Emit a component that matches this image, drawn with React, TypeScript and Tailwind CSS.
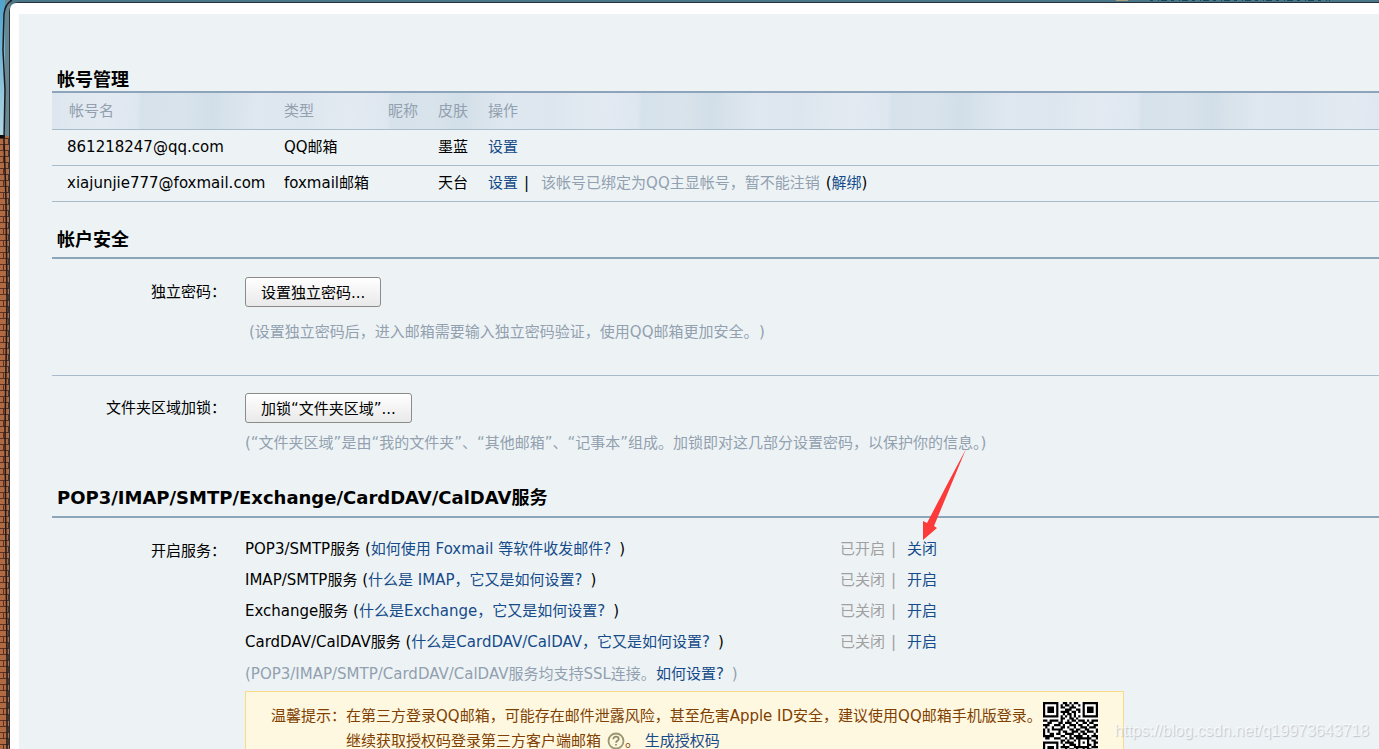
import type { ReactNode } from 'react';

type Account = {
    name: string;
    type: string;
    skin: string;
    bound?: boolean;
};

type Service = {
    name: string;
    help: string;
    enabled: boolean;
};

const accounts: Account[] = [
    { name: '861218247@qq.com', type: 'QQ邮箱', skin: '墨蓝' },
    { name: 'xiajunjie777@foxmail.com', type: 'foxmail邮箱', skin: '天台', bound: true },
];

const services: Service[] = [
    { name: 'POP3/SMTP服务', help: '如何使用 Foxmail 等软件收发邮件?', enabled: true },
    { name: 'IMAP/SMTP服务', help: '什么是 IMAP，它又是如何设置?', enabled: false },
    { name: 'Exchange服务', help: '什么是Exchange，它又是如何设置?', enabled: false },
    { name: 'CardDAV/CalDAV服务', help: '什么是CardDAV/CalDAV，它又是如何设置?', enabled: false },
];

const qrRows = [
    '1111111001101011001111111',
    '1000001010110100101000001',
    '1011101011001110001011101',
    '1011101000111001101011101',
    '1011101011110110101011101',
    '1000001001011010001000001',
    '1111111010101010101111111',
    '0000000011001101000000000',
    '1101111010010110111010111',
    '0011000110111001001101100',
    '1110011101001110110010011',
    '0100100011010010011101110',
    '1010111110001101100110001',
    '1010000101100111011011101',
    '1001101100111100101100010',
    '1111100011001011110010111',
    '0110011100101101111111001',
    '0000000011010010100010110',
    '1111111010111100101010011',
    '1000001001001110100011010',
    '1011101011110011111110111',
    '1011101000101101001011000',
    '1011101010011110110101101',
    '1000001011001001101100110',
    '1111111001110110011011001',
];

function Backdrop() {
    return (
        <svg aria-hidden="true" className="absolute inset-0 h-full w-full">
            <defs>
                <linearGradient id="sky" x1="0" y1="0" x2="0" y2="1">
                    <stop offset="0" stopColor="#4fa3cc" />
                    <stop offset="1" stopColor="#b4d6e3" />
                </linearGradient>
                <pattern id="bricks" width="10" height="12" patternUnits="userSpaceOnUse">
                    <rect width="10" height="12" fill="#b16a42" />
                    <path d="M0 .5H10M0 6.5H10M3.5 0V6M8.5 6V12" stroke="#5a3020" />
                </pattern>
            </defs>
            <rect width="100%" height="100%" fill="#4b7688" />
            <rect width="5" height="136" fill="url(#sky)" />
            <rect x="5" width="5" height="136" fill="#6b8792" />
            <rect y="136" width="10" height="100%" fill="url(#bricks)" />
            <rect y="135" width="5" height="3" fill="#0c0a0a" />
            <path
                d="M7 800V660L6 560L5 430L7 300L6 200L4 140L5 90L3 50L4 14Q5 4 12 0"
                fill="none"
                stroke="#171c20"
                strokeWidth="1.5"
            />
            <path d="M9.500 800V12Q10 3 18 2.500H3000" fill="none" stroke="#25313a" />
            <path d="M1116 .5h12" stroke="#a5a079" />
            <path d="M1150 .5h180" stroke="#1d4657" strokeDasharray="3 5 1 2 6 4" />
        </svg>
    );
}

function Heading({ className, children }: { className: string; children: ReactNode }) {
    return (
        <h2 className={`border-b-2 border-[#8ca5bb] pl-[5px] text-[18px] leading-[22px] font-bold ${className}`}>
            {children}
        </h2>
    );
}

function TextLink({ children }: { children: ReactNode }) {
    return (
        <a href="#" className="text-[#164b8a] hover:underline">
            {children}
        </a>
    );
}

function ActionButton({ id, children }: { id: string; children: ReactNode }) {
    return (
        <button
            id={id}
            type="button"
            className="h-[30px] rounded-[3px] border border-[#8b8b8b] bg-linear-to-b from-white to-[#e9e9e9] px-[15px] pt-0.5 leading-6"
        >
            {children}
        </button>
    );
}

function Arrow() {
    return (
        <svg
            aria-hidden="true"
            viewBox="0 0 44 91"
            className="pointer-events-none absolute bottom-[25px] left-4 h-[91px] w-11"
        >
            <path d="M43 0L27 30L4 74L0 72V91L14 79L11 77Z" fill="#fd3a3a" />
        </svg>
    );
}

function HelpIcon() {
    return (
        <svg aria-hidden="true" viewBox="0 0 18 18" className="ml-1.5 inline-block h-[18px] w-[18px] align-[-4px]">
            <circle cx="9" cy="9" r="7.500" fill="#fbf6dc" stroke="#9a9672" strokeWidth="1.800" />
            <path
                d="M6.300 7.200C6.300 5.600 7.500 4.700 9 4.700S11.700 5.600 11.700 7C11.700 8.700 9 8.800 9 10.800M9 12V13.600"
                fill="none"
                stroke="#8d8966"
                strokeWidth="1.700"
            />
        </svg>
    );
}

function QrCode() {
    return (
        <svg role="img" aria-label="QQ邮箱手机版" viewBox="0 0 25 25" className="h-[55px] w-[55px] shrink-0 bg-white">
            <path
                d={qrRows
                    .flatMap((row, y) => [...row].map((cell, x) => (cell === '1' ? `M${x} ${y}h1v1h-1z` : '')))
                    .join('')}
                fill="#000"
            />
        </svg>
    );
}

function Accounts() {
    return (
        <table className="w-full table-fixed text-left leading-5">
            <colgroup>
                <col className="w-[217px]" />
                <col className="w-[104px]" />
                <col className="w-[50px]" />
                <col className="w-[50px]" />
                <col />
            </colgroup>
            <thead>
                <tr className="h-9 border-b border-[#a9bccb] bg-[repeating-linear-gradient(92deg,#dde6ee_0px,#e3eaf2_50px,#dee6ef_86px,#d6e2eb_90px,#d9e3ec_130px,#d2dfe8_160px,#d9e3ec_180px,#dfe7f0_205px,#dde6ee_250px)] text-[#92a0af]">
                    <th className="pl-[17px] font-normal">帐号名</th>
                    <th className="pl-[15px] font-normal">类型</th>
                    <th className="pl-[15px] font-normal">昵称</th>
                    <th className="pl-[15px] font-normal">皮肤</th>
                    <th className="pl-[15px] font-normal">操作</th>
                </tr>
            </thead>
            <tbody>
                {accounts.map(account => (
                    <tr key={account.name} className="h-9 border-b border-[#a9bccb] whitespace-nowrap">
                        <td className="pl-[15px]">{account.name}</td>
                        <td className="pl-[15px]">{account.type}</td>
                        <td />
                        <td className="pl-[15px]">{account.skin}</td>
                        <td className="pl-[15px]">
                            <TextLink>设置</TextLink>
                            {account.bound && (
                                <>
                                    <span className="mx-1.5">|</span>
                                    <span className="mx-1.5 text-[#92a0af]">
                                        该帐号已绑定为QQ主显帐号，暂不能注销
                                    </span>
                                    (<TextLink>解绑</TextLink>)
                                </>
                            )}
                        </td>
                    </tr>
                ))}
            </tbody>
        </table>
    );
}

export default function App() {
    return (
        <div className="relative h-screen overflow-hidden font-['DejaVu_Sans','Noto_Sans_CJK_SC',sans-serif] text-[15px] text-black">
            <Backdrop />
            <main className="relative mt-[3px] ml-2.5 rounded-tl-md bg-white pt-[11px] pl-[9px]">
                <div className="min-h-screen bg-[#edf3f5] pt-[55px] pl-[33px] whitespace-nowrap">
                    <Heading className="">帐号管理</Heading>
                    <Accounts />

                    <Heading className="mt-[27px] pb-1.5">帐户安全</Heading>
                    <div className="flex gap-[19px] border-b border-[#a9bccb] pt-[18px] pb-[31px]">
                        <label htmlFor="password" className="w-[174px] text-right leading-[30px]">
                            独立密码：
                        </label>
                        <div>
                            <ActionButton id="password">设置独立密码...</ActionButton>
                            <p className="mt-[13px] pl-1 leading-6 text-[#92a0af]">
                                (设置独立密码后，进入邮箱需要输入独立密码验证，使用QQ邮箱更加安全。
                                <span className="ml-2">)</span>
                            </p>
                        </div>
                    </div>
                    <div className="flex gap-[19px] pt-[17px]">
                        <label htmlFor="folder-lock" className="w-[174px] text-right leading-[30px]">
                            文件夹区域加锁：
                        </label>
                        <div>
                            <ActionButton id="folder-lock">加锁“文件夹区域”...</ActionButton>
                            <p className="mt-2 leading-6 text-[#92a0af]">
                                (“文件夹区域”是由“我的文件夹”、“其他邮箱”、“记事本”组成。加锁即对这几部分设置密码，以保护你的信息。)
                            </p>
                        </div>
                    </div>

                    <Heading className="mt-8 pb-[7px]">POP3/IMAP/SMTP/Exchange/CardDAV/CalDAV服务</Heading>
                    <div className="flex gap-[19px] pt-4">
                        <div className="w-[174px] text-right leading-[34px]">开启服务：</div>
                        <div className="leading-[31px]">
                            {services.map(service => (
                                <div key={service.name} className="flex">
                                    <div className="w-[595px]">
                                        {service.name} (<TextLink>{service.help}</TextLink>
                                        <span className="ml-2">)</span>
                                    </div>
                                    <div className="w-[67px] text-[#a0a0a0]">
                                        {service.enabled ? '已开启' : '已关闭'}
                                        <span className="ml-1.5">|</span>
                                    </div>
                                    <div className="relative">
                                        <TextLink>{service.enabled ? '关闭' : '开启'}</TextLink>
                                        {service.enabled && <Arrow />}
                                    </div>
                                </div>
                            ))}
                            <p className="mt-px text-[#92a0af]">
                                (POP3/IMAP/SMTP/CardDAV/CalDAV服务均支持SSL连接。
                                <TextLink>如何设置?</TextLink>
                                <span className="ml-2">)</span>
                            </p>
                            <div className="mt-px flex w-[879px] justify-between border border-[#f8dc8a] bg-[#fff8e1] py-2.5 pr-[25px] pl-[25px] leading-[25px] text-[#804000]">
                                <div className="flex pt-0.5">
                                    <div>温馨提示：</div>
                                    <div>
                                        <p>在第三方登录QQ邮箱，可能存在邮件泄露风险，甚至危害Apple ID安全，建议使用QQ邮箱手机版登录。</p>
                                        <p>
                                            继续获取授权码登录第三方客户端邮箱
                                            <HelpIcon />。 <TextLink>生成授权码</TextLink>
                                        </p>
                                    </div>
                                </div>
                                <QrCode />
                            </div>
                        </div>
                    </div>
                </div>
            </main>
            <div className="pointer-events-none absolute right-2.5 bottom-2 font-['Liberation_Sans',sans-serif] text-[16px] leading-5 text-white/70 [text-shadow:1px_1px_1px_#9ca3af90]">
                https://blog.csdn.net/q19973643718
            </div>
        </div>
    );
}
